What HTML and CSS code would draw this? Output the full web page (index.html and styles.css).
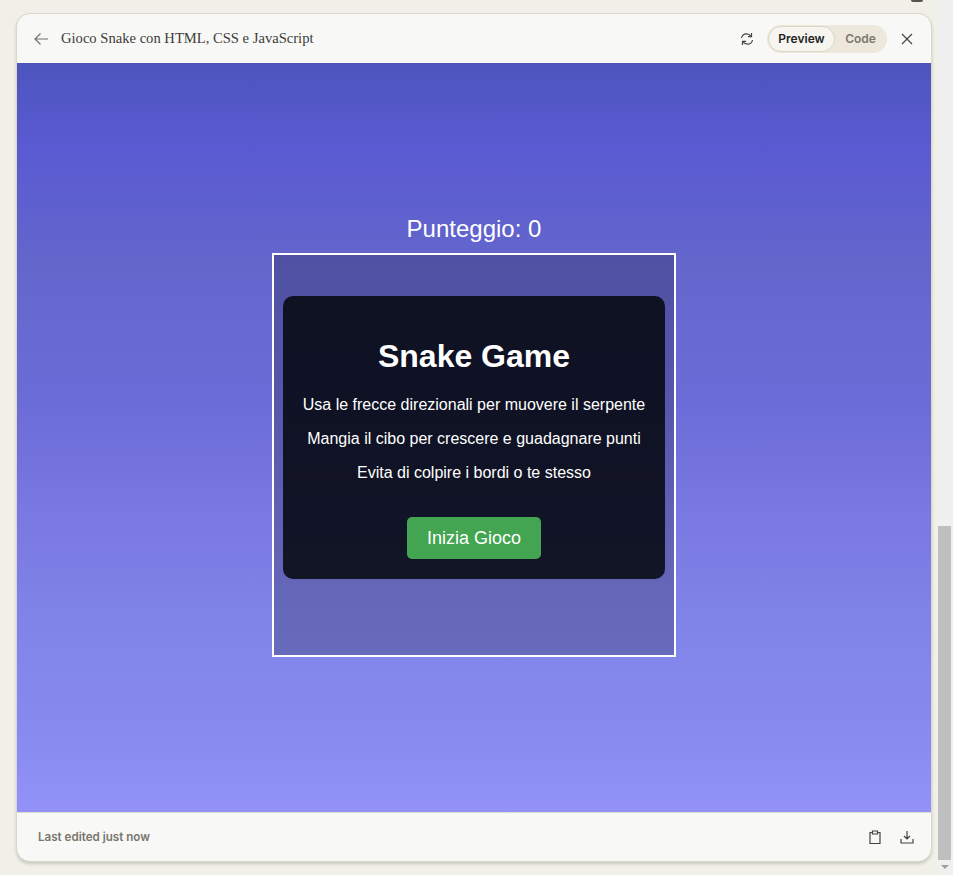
FILE: index.html

```html
<!DOCTYPE html>
<html lang="it">
<head>
  <meta charset="UTF-8" />
  <meta name="viewport" content="width=device-width, initial-scale=1.0" />
  <title>Gioco Snake con HTML, CSS e JavaScript</title>
  <link rel="stylesheet" href="styles.css">
</head>
<body>
<div class="page">
  <div class="page-main">
    <div class="corner-mark"></div>
    <div class="artifact">
      <!-- barra in alto -->
      <header class="artifact-head">
        <svg class="icon back" width="16" height="16" viewBox="0 0 16 16"><path d="M15 8H2M7.5 2.5 2 8l5.5 5.5"/></svg>
        <span class="artifact-title">Gioco Snake con HTML, CSS e JavaScript</span>
        <svg class="icon reload" width="14" height="14" viewBox="0 0 14 14"><path d="M1.5 6C2 3.500 4 1.800 6.500 1.800c2 0 3.500 1 4.700 2.700M11.500 1v3.700H7.900M12.500 8c-.5 2.500-2.500 4.200-5 4.200-2 0-3.500-1-4.700-2.700M2.500 13V9.300h3.600"/></svg>
        <div class="toggle">
          <span class="toggle-item active">Preview</span>
          <span class="toggle-item code">Code</span>
        </div>
        <svg class="icon close" width="12" height="12" viewBox="0 0 12 12"><path d="M1 1l10 10M11 1 1 11"/></svg>
      </header>

      <!-- anteprima del gioco -->
      <main class="preview">
        <div class="score">Punteggio: 0</div>
        <div class="board">
          <div class="start-box">
            <h1>Snake Game</h1>
            <p>Usa le frecce direzionali per muovere il serpente</p>
            <p>Mangia il cibo per crescere e guadagnare punti</p>
            <p>Evita di colpire i bordi o te stesso</p>
            <button class="start-btn">Inizia Gioco</button>
          </div>
        </div>
      </main>

      <footer class="artifact-foot">
        <span class="edited">Last edited just now</span>
        <svg class="icon clip" width="14" height="14" viewBox="0 0 14 14"><path d="M4.500 2.500H2v11h10v-11H9.500M4.500 1h5v3h-5z"/></svg>
        <svg class="icon save" width="14" height="14" viewBox="0 0 14 14"><path d="M7 1v8M4 6l3 3 3-3M1 9v4h12V9"/></svg>
      </footer>
    </div>
  </div>
  <div class="scrollbar">
    <div class="scroll-thumb"></div>
    <div class="scroll-arrow"></div>
  </div>
</div>
</body>
</html>
```

FILE: styles.css

```css
* {
  box-sizing: border-box;
}

body {
  margin: 0;
  background: #f0efe8;
  font-family: "Liberation Sans", Arial, sans-serif;
}

.page {
  display: flex;
  height: 875px;
  overflow: hidden;
}

.page-main {
  position: relative;
  flex: 1;
  padding: 13px 6px 13px 16px;
}

.corner-mark {
  position: absolute;
  top: 0;
  left: 911px;
  width: 12px;
  height: 2px;
  border-radius: 0 0 6px 6px;
  background: #55544e;
}

.artifact {
  display: flex;
  flex-direction: column;
  height: 849px;
  border: 1px solid #d9d8cb;
  border-radius: 14px;
  overflow: hidden;
  background: #f8f8f7;
  box-shadow: 0 2px 3px rgba(120, 118, 100, 0.3);
}

.artifact-head {
  display: flex;
  align-items: center;
  height: 49px;
  padding: 0 18px 0 16px;
  flex-shrink: 0;
}

.icon {
  fill: none;
  stroke: #45443e;
  stroke-width: 1.2;
  flex-shrink: 0;
}

.back {
  stroke: #73726a;
}

.artifact-title {
  margin-left: 12px;
  font-family: "Liberation Serif", serif;
  font-size: 14.600px;
  color: #3d3d38;
  flex: 1;
}

.reload {
  margin-right: 13px;
}

.toggle {
  display: flex;
  align-items: center;
  width: 120px;
  height: 28px;
  padding: 1px;
  border-radius: 14px;
  background: #ede7dc;
  font-family: "Inter", sans-serif;
  font-size: 12px;
  font-weight: 600;
  color: #7a776c;
}

.toggle-item {
  display: flex;
  align-items: center;
  justify-content: center;
  height: 26px;
}

.toggle-item.code {
  width: 51px;
}

.toggle-item.active {
  width: 67px;
  border: 1px solid #d9d7c6;
  border-radius: 13px;
  background: #f6f5ef;
  color: #24231f;
}

.close {
  margin-left: 14px;
}

.preview {
  flex: 1;
  display: flex;
  flex-direction: column;
  align-items: center;
  justify-content: center;
  padding-bottom: 4px;
  background: linear-gradient(180deg, #4d55bd 0, #5a5ad2 85px, #6466cc 200px, #6c6cd8 340px, #7a78e2 450px, #8084e8 560px, #8688ee 650px, #9292f8 749px);
}

.score {
  margin-bottom: 10px;
  font-size: 24px;
  color: #fff;
}

.board {
  display: flex;
  align-items: flex-start;
  justify-content: center;
  width: 404px;
  height: 404px;
  padding-top: 41px;
  border: 2px solid #fff;
  background: rgba(0, 0, 0, 0.2);
}

.start-box {
  width: 382px;
  padding: 21px 10px 20px;
  border-radius: 10px;
  background: rgba(0, 4, 6, 0.82);
  color: #fff;
  text-align: center;
}

.start-box h1 {
  font-size: 32px;
}

.start-box p {
  font-size: 16px;
  margin: 16px 0;
}

.start-btn {
  margin-top: 19px;
  padding: 10.500px 20px;
  border: none;
  border-radius: 5px;
  background: #43a551;
  color: #fff;
  font-family: "Liberation Sans", Arial, sans-serif;
  font-size: 18px;
}

.artifact-foot {
  display: flex;
  align-items: center;
  gap: 18px;
  height: 49px;
  padding: 0 17px 0 21px;
  border-top: 1px solid #dcdcd6;
  flex-shrink: 0;
}

.edited {
  flex: 1;
  font-family: "Inter", sans-serif;
  font-size: 11.600px;
  font-weight: 600;
  color: #77766b;
}

.scrollbar {
  display: flex;
  flex-direction: column;
  width: 15px;
  background: #f0f0f0;
}

.scroll-thumb {
  width: 13px;
  height: 334px;
  margin-top: 526px;
  background: #bfbfbf;
}

.scroll-arrow {
  width: 0;
  height: 0;
  margin: 5px 0 0 3px;
  border-left: 4px solid transparent;
  border-right: 4px solid transparent;
  border-top: 4px solid #a0a0a0;
}
```
